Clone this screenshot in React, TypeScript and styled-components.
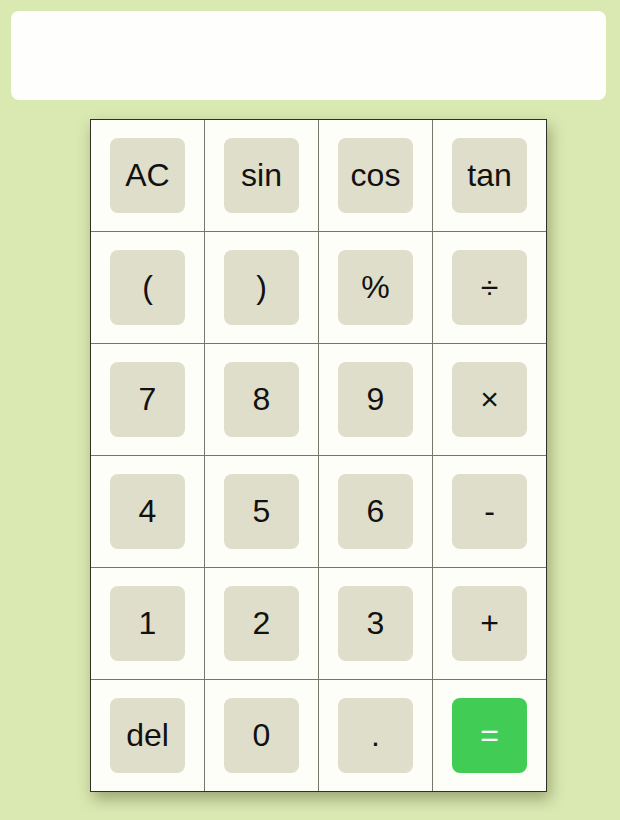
import React from "react";
import styled, { createGlobalStyle } from "styled-components";

const Global = createGlobalStyle`
  html, body {
    margin: 0;
    padding: 0;
    background: #dae8b2;
    font-family: "Liberation Sans", Arial, sans-serif;
  }
`;

const Page = styled.div`
  padding: 11px 14px 20px 11px;
  display: flex;
  flex-direction: column;
  align-items: flex-start;
`;

const Display = styled.div`
  width: 595px;
  height: 89px;
  background: #fefefc;
  border-radius: 8px;
`;

const Calculator = styled.div`
  margin: 19px 0 0 79px;
  display: grid;
  grid-template-columns: repeat(4, 113px);
  grid-auto-rows: 111px;
  gap: 1px;
  background: #76776a;
  border: 1px solid #2f3028;
  box-shadow: 3px 7px 14px rgba(60, 70, 20, 0.4);
`;

const Cell = styled.div`
  background: #fefef8;
  display: flex;
  align-items: center;
  justify-content: center;
`;

const Key = styled.button<{ $accent?: boolean }>`
  width: 75px;
  height: 75px;
  border: none;
  border-radius: 8px;
  padding: 0;
  background: ${(p) => (p.$accent ? "#41cd55" : "#dfdeca")};
  color: ${(p) => (p.$accent ? "#ffffff" : "#111111")};
  font-family: "Liberation Sans", Arial, sans-serif;
  font-size: 32px;
  display: flex;
  align-items: center;
  justify-content: center;
  cursor: pointer;
`;

const keys = [
  "AC", "sin", "cos", "tan",
  "(", ")", "%", "÷",
  "7", "8", "9", "×",
  "4", "5", "6", "-",
  "1", "2", "3", "+",
  "del", "0", ".", "=",
];

export default function App() {
  return (
    <>
      <Global />
      <Page>
        <Display />
        <Calculator>
          {keys.map((k) => (
            <Cell key={k}>
              <Key $accent={k === "="}>{k}</Key>
            </Cell>
          ))}
        </Calculator>
      </Page>
    </>
  );
}
